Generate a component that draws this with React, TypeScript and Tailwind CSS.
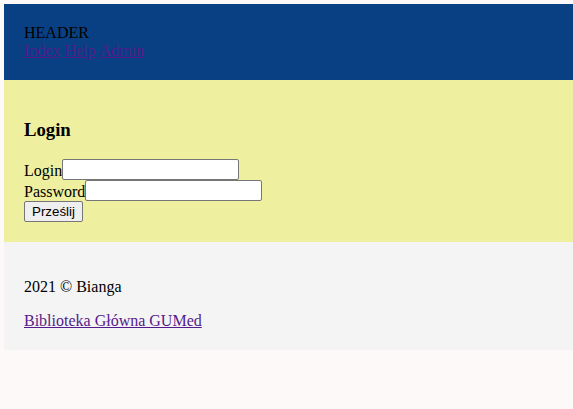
import React from 'react';

const App: React.FC = () => {
  return (
    <div className="min-h-[409px] bg-[#fdf9f8] pl-1 pt-1 font-['Liberation_Serif',serif] text-base leading-[18px] text-black">
      {/* header */}
      <header className="bg-[#084083] p-5">
        <div>HEADER</div>
        <nav className="flex gap-1">
          <a href="#" className="text-[#551a8b] underline">Index</a>
          <a href="#" className="text-[#551a8b] underline">Help</a>
          <a href="#" className="text-[#551a8b] underline">Admin</a>
        </nav>
      </header>

      {/* login */}
      <main className="bg-[#eeef9f] p-5">
        <h3 className="my-[18.7px] text-[18.72px] font-bold leading-[22px]">Login</h3>
        <form onSubmit={(e) => e.preventDefault()}>
          <div className="flex items-end h-[21px]">
            Login
            <input type="text" className="h-[21px] w-[177px] rounded-[2px] border border-[#767676] bg-white px-[2px]" />
          </div>
          <div className="flex items-end h-[21px]">
            Password
            <input type="password" className="h-[21px] w-[177px] rounded-[2px] border border-[#767676] bg-white px-[2px]" />
          </div>
          <button
            type="submit"
            className="h-[21px] w-[59px] rounded-[2px] border border-[#767676] bg-[#efefef] font-['Liberation_Sans',sans-serif] text-[13.33px] leading-none"
          >
            Prześlij
          </button>
        </form>
      </main>

      {/* footer */}
      <footer className="bg-[#f4f4f4] px-5 pt-5 pb-[20px]">
        <p className="my-4">2021 © Bianga</p>
        <a href="#" className="text-[#551a8b] underline">Biblioteka Główna GUMed</a>
      </footer>
    </div>
  );
};

export default App;
